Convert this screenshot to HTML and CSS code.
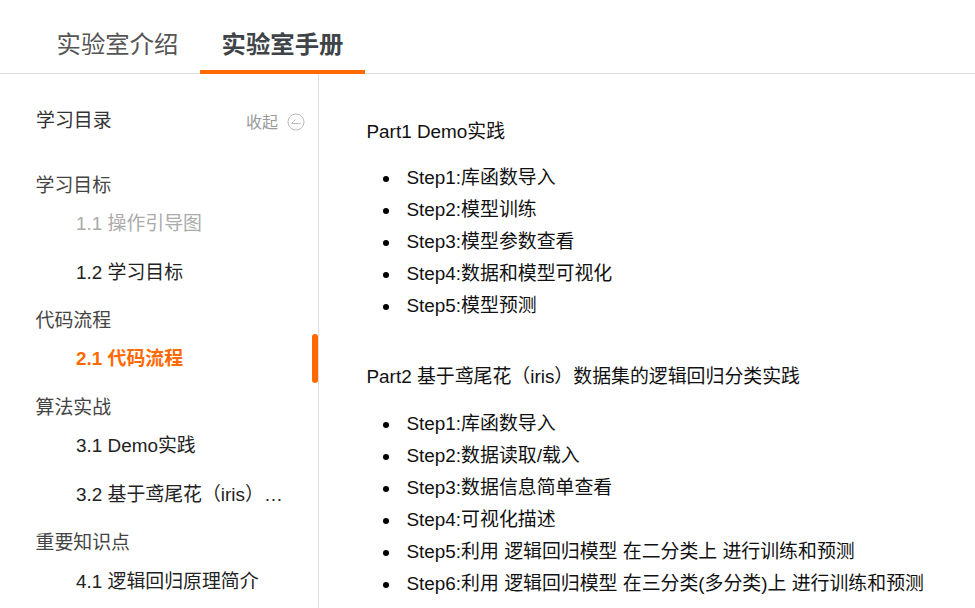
FILE: index.html
```
<!DOCTYPE html>
<html lang="zh-CN">
<head>
<meta charset="utf-8">
<title>实验室手册</title>
<link rel="stylesheet" href="styles.css">
</head>
<body>
<header class="tabs">
  <a class="tab">实验室介绍</a>
  <a class="tab tab-active">实验室手册</a>
</header>
<div class="layout">
  <aside class="sidebar">
    <div class="side-head">
      <span class="side-title">学习目录</span>
      <span class="collapse">收起
        <svg class="collapse-icon" width="18" height="18" viewBox="0 0 18 18" fill="none" stroke="#bbb">
          <circle cx="9" cy="9" r="8"/>
          <path d="M13.5 10.5h-9l4-4"/>
        </svg>
      </span>
    </div>
    <nav class="toc">
      <div class="toc-group">学习目标</div>
      <div class="toc-item toc-muted">1.1 操作引导图</div>
      <div class="toc-item">1.2 学习目标</div>
      <div class="toc-group">代码流程</div>
      <div class="toc-item toc-active">2.1 代码流程</div>
      <div class="toc-group">算法实战</div>
      <div class="toc-item">3.1 Demo实践</div>
      <div class="toc-item">3.2 基于鸢尾花（iris）数据集的逻辑回归分类实践</div>
      <div class="toc-group">重要知识点</div>
      <div class="toc-item">4.1 逻辑回归原理简介</div>
    </nav>
  </aside>
  <main class="content">
    <p class="part">Part1 Demo实践</p>
    <ul class="steps">
      <li>Step1:库函数导入</li>
      <li>Step2:模型训练</li>
      <li>Step3:模型参数查看</li>
      <li>Step4:数据和模型可视化</li>
      <li>Step5:模型预测</li>
    </ul>
    <p class="part">Part2 基于鸢尾花（iris）数据集的逻辑回归分类实践</p>
    <ul class="steps steps-second">
      <li>Step1:库函数导入</li>
      <li>Step2:数据读取/载入</li>
      <li>Step3:数据信息简单查看</li>
      <li>Step4:可视化描述</li>
      <li>Step5:利用 逻辑回归模型 在二分类上 进行训练和预测</li>
      <li>Step6:利用 逻辑回归模型 在三分类(多分类)上 进行训练和预测</li>
    </ul>
  </main>
</div>
</body>
</html>
```
FILE: styles.css
```
html, body {
  margin: 0;
  height: 100%;
  overflow: hidden;
  background: #fff;
}
body {
  font-family: "Liberation Sans", "Noto Sans CJK SC", sans-serif;
  color: #222;
}
.tabs {
  display: flex;
  height: 73px;
  padding-left: 35px;
  border-bottom: 1px solid #ddd;
}
.tab {
  position: relative;
  width: 165px;
  text-align: center;
  font-size: 24.4px;
  line-height: 90px;
  height: 73px;
  color: #555;
}
.tab-active {
  font-weight: 700;
  color: #3f4448;
}
.tab-active::after {
  content: "";
  position: absolute;
  left: 0;
  right: 0;
  bottom: -1px;
  height: 4px;
  background: #ff6a00;
}
.layout {
  display: flex;
  height: 534px;
  overflow: hidden;
}
.sidebar {
  width: 319px;
  flex: none;
  box-sizing: border-box;
  border-right: 1px solid #ddd;
}
.side-head {
  display: flex;
  justify-content: space-between;
  align-items: center;
  height: 28px;
  margin: 30px 13px 0 36px;
}
.side-title {
  font-size: 18.9px;
  color: #333;
}
.collapse {
  display: flex;
  align-items: center;
  gap: 9px;
  font-size: 16px;
  color: #999;
  margin-top: 6px;
}
.collapse-icon {
  margin-top: 2px;
}
.toc {
  margin-top: 29px;
}
.toc-group {
  height: 37.67px;
  padding: 10.5px 0 0 35.5px;
  box-sizing: border-box;
  font-size: 18.9px;
  line-height: 28px;
  color: #444;
}
.toc-item {
  position: relative;
  height: 49px;
  line-height: 49px;
  width: 209px;
  padding-left: 76px;
  font-size: 18.9px;
  color: #222;
  white-space: nowrap;
  overflow: hidden;
  text-overflow: ellipsis;
}
.toc-muted {
  color: #aaa;
}
.toc-active {
  width: auto;
  color: #ff6a00;
  font-weight: 700;
}
.toc-active::after {
  content: "";
  position: absolute;
  right: 0;
  top: 0;
  width: 6px;
  height: 49px;
  border-radius: 3px;
  background: #ff6a00;
}
.content {
  flex: 1;
  padding: 42px 0 0 47.5px;
  font-size: 18.9px;
  color: #111;
  white-space: nowrap;
}
.part {
  margin: 0;
  line-height: 32px;
}
.steps {
  margin: 14px 0 39px;
  padding-left: 40px;
  list-style: none;
}
.steps-second {
  margin: 15px 0 0;
}
.steps li {
  position: relative;
  line-height: 32px;
}
.steps li::before {
  content: "";
  position: absolute;
  left: -23.5px;
  top: 14px;
  width: 6px;
  height: 6px;
  border-radius: 50%;
  background: #000;
}
```
